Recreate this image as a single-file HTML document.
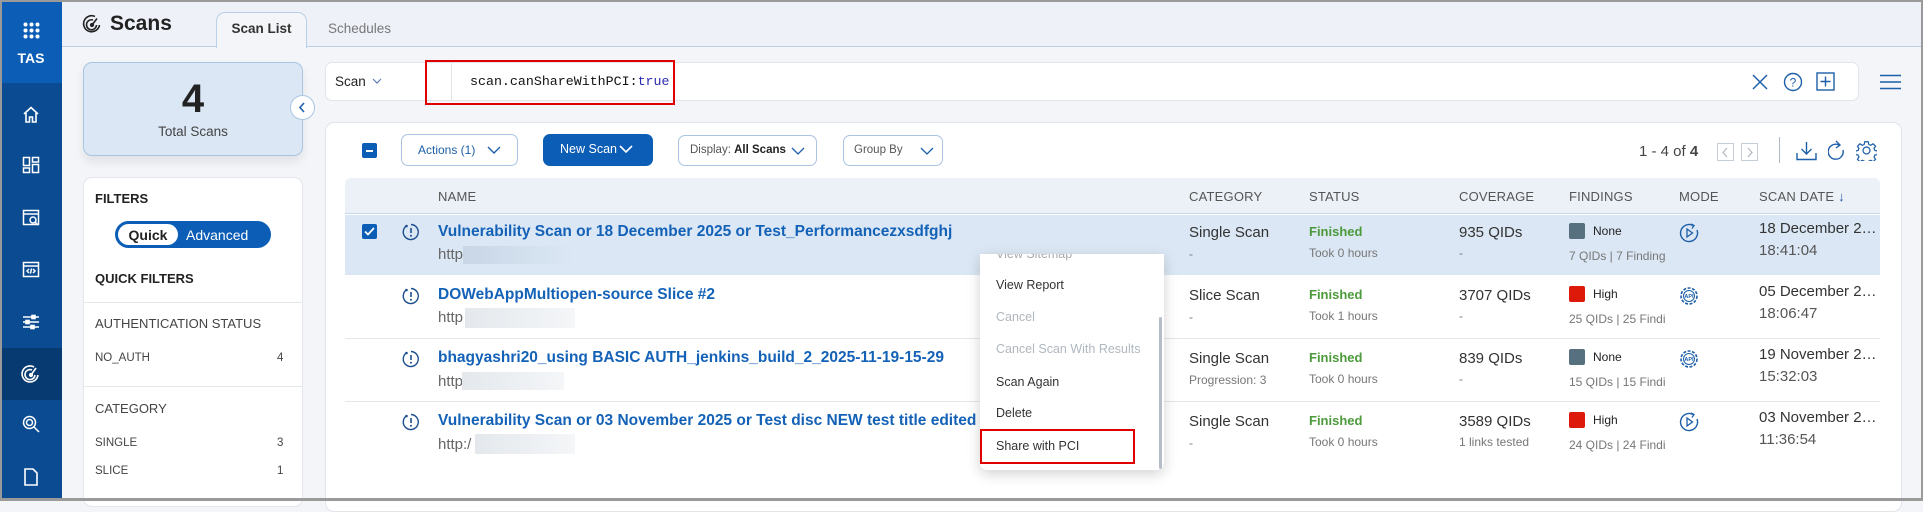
<!DOCTYPE html>
<html><head><meta charset="utf-8"><style>
*{box-sizing:border-box;margin:0;padding:0}
body{width:1923px;height:501px;overflow:hidden;font-family:"Liberation Sans",sans-serif;background:#f3f5f8;position:relative;color:#222}
.a{position:absolute}
.side{left:0;top:0;width:62px;height:501px;background:#0a4b91}
.t{position:absolute;white-space:nowrap}
.ico{position:absolute;left:21px;width:20px;height:20px}
.hdr{font-size:13px;color:#555;letter-spacing:.2px}
.ttl{font-size:15.5px;font-weight:bold;color:#1462b7}
.sub{font-size:12px;color:#777}
.big{font-size:15px;color:#333}
.grn{font-size:13px;font-weight:bold;color:#4c9a3c}
.btn{position:absolute;border:1px solid #a9c3e0;border-radius:7px;background:#fff;font-size:12px;color:#1d5fa8}
.sep{position:absolute;height:1px;background:#e3e7ec}
</style></head><body>
<div class="a" style="left:0;top:0;width:1923px;height:2px;background:#9a9a9a;z-index:9"></div>
<div class="a" style="left:0;top:498px;width:1923px;height:3px;background:#9a9a9a;z-index:9"></div>
<div class="a" style="left:0;top:0;width:2px;height:501px;background:#9a9a9a;z-index:9"></div>
<div class="a" style="left:1921px;top:0;width:2px;height:501px;background:#9a9a9a;z-index:9"></div>

<div class="a side"></div>
<div class="a" style="left:0;top:0;width:62px;height:83px;background:#0b5db6"></div>
<svg class="a" style="left:23px;top:22px" width="17" height="17"><g fill="#fff"><circle cx="2.5" cy="2.5" r="2"/><circle cx="8.5" cy="2.5" r="2"/><circle cx="14.5" cy="2.5" r="2"/><circle cx="2.5" cy="8.5" r="2"/><circle cx="8.5" cy="8.5" r="2"/><circle cx="14.5" cy="8.5" r="2"/><circle cx="2.5" cy="14.5" r="2"/><circle cx="8.5" cy="14.5" r="2"/><circle cx="14.5" cy="14.5" r="2"/></g></svg>
<div class="t" style="left:0;width:62px;text-align:center;top:50px;color:#fff;font-weight:bold;font-size:14px">TAS</div>
<svg class="ico" style="top:105px" viewBox="0 0 20 20" fill="none" stroke="#fff" stroke-width="1.6"><path d="M3 9 L10 2.5 L17 9 M5 8 V17 H8.5 V12 H11.5 V17 H15 V8"/></svg>
<svg class="ico" style="top:155px" viewBox="0 0 20 20" fill="none" stroke="#fff" stroke-width="1.5"><rect x="2.5" y="2.5" width="6" height="8"/><rect x="2.5" y="13" width="6" height="4.5"/><rect x="11.5" y="2.5" width="6" height="4.5"/><rect x="11.5" y="9.5" width="6" height="8"/></svg>
<svg class="ico" style="top:208px" viewBox="0 0 20 20" fill="none" stroke="#fff" stroke-width="1.5"><rect x="2.5" y="2.5" width="15" height="14"/><path d="M2.5 6 H17.5"/><circle cx="12" cy="12" r="3"/><path d="M14 14 L17 17"/></svg>
<svg class="ico" style="top:260px" viewBox="0 0 20 20" fill="none" stroke="#fff" stroke-width="1.5"><rect x="2.5" y="2.5" width="15" height="14"/><path d="M2.5 6 H17.5 M8 9 L6 11 L8 13 M12 9 L14 11 L12 13 M10.5 8.5 L9.5 13.5"/></svg>
<svg class="ico" style="top:312px" viewBox="0 0 20 20" fill="none" stroke="#fff" stroke-width="1.6"><path d="M2 5 H18 M2 10 H18 M2 15 H18"/><rect x="11" y="3.5" width="3" height="3" fill="#fff"/><rect x="5" y="8.5" width="3" height="3" fill="#fff"/><rect x="10" y="13.5" width="3" height="3" fill="#fff"/></svg>
<div class="a" style="left:0;top:348px;width:62px;height:52px;background:#083a72"></div>
<svg class="ico" style="top:364px" viewBox="0 0 20 20" fill="none" stroke="#fff" stroke-width="1.6"><path d="M13 3 A8 8 0 1 0 17 11"/><path d="M11 6 A5 5 0 1 0 14 11"/><circle cx="10" cy="11" r="1.3" fill="#fff"/><path d="M10 11 L15 4"/></svg>
<svg class="ico" style="top:414px" viewBox="0 0 20 20" fill="none" stroke="#fff" stroke-width="1.5"><circle cx="8.5" cy="8.5" r="6"/><circle cx="8.5" cy="8.5" r="3"/><path d="M13 13 L18 18"/></svg>
<svg class="ico" style="top:467px" viewBox="0 0 20 20" fill="none" stroke="#fff" stroke-width="1.6"><path d="M4 2 H12 L16 6 V18 H4 Z"/></svg>

<div class="a" style="left:62px;top:0;width:1861px;height:47px;background:#eef2f8;border-bottom:1px solid #b9d0e8"></div>
<svg class="a" style="left:82px;top:14px" width="20" height="20" viewBox="0 0 20 20" fill="none" stroke="#222" stroke-width="1.6"><path d="M13 2.5 A8 8 0 1 0 17.5 11"/><path d="M11 6 A5 5 0 1 0 14.5 11"/><circle cx="10" cy="11" r="1.3" fill="#222"/><path d="M10 11 L15 4.5"/></svg>
<div class="t" style="left:110px;top:12px;font-size:21px;font-weight:bold;color:#222">Scans</div>
<div class="a" style="left:216px;top:12px;width:91px;height:36px;background:#f3f5f8;border:1px solid #b9d0e8;border-bottom:none;border-radius:9px 9px 0 0"></div>
<div class="t" style="left:216px;width:91px;text-align:center;top:21px;font-size:13.5px;font-weight:bold;color:#333">Scan List</div>
<div class="t" style="left:328px;top:21px;font-size:13.5px;color:#777">Schedules</div>

<div class="a" style="left:83px;top:62px;width:220px;height:94px;background:#dbe7f4;border:1px solid #aac5e3;border-radius:9px;box-shadow:0 6px 10px rgba(0,0,0,.08)"></div>
<div class="t" style="left:83px;width:220px;text-align:center;top:77px;font-size:40px;font-weight:bold;color:#222">4</div>
<div class="t" style="left:83px;width:220px;text-align:center;top:124px;font-size:13.5px;color:#444">Total Scans</div>
<div class="a" style="left:290px;top:95px;width:25px;height:25px;border-radius:50%;background:#fff;border:1px solid #aac5e3"></div>
<svg class="a" style="left:297px;top:102px" width="11" height="11"><path d="M7 1 L3 5.5 L7 10" fill="none" stroke="#1d5fa8" stroke-width="1.6"/></svg>

<div class="a" style="left:83px;top:177px;width:220px;height:330px;background:#fff;border:1px solid #e3e7ec;border-radius:9px"></div>
<div class="t" style="left:95px;top:191px;font-size:13px;font-weight:bold;color:#222">FILTERS</div>
<div class="a" style="left:115px;top:221px;width:156px;height:27px;border-radius:14px;background:#0b5db6"></div>
<div class="a" style="left:118px;top:224px;width:60px;height:21px;border-radius:11px;background:#fff"></div>
<div class="t" style="left:118px;width:60px;text-align:center;top:227px;font-size:14px;font-weight:bold;color:#222">Quick</div>
<div class="t" style="left:186px;top:227px;font-size:14px;color:#fff">Advanced</div>
<div class="t" style="left:95px;top:271px;font-size:13px;font-weight:bold;color:#222">QUICK FILTERS</div>
<div class="sep" style="left:84px;top:302px;width:218px"></div>
<div class="t" style="left:95px;top:316px;font-size:13px;color:#444">AUTHENTICATION STATUS</div>
<div class="t" style="left:95px;top:352px;font-size:11.5px;color:#444">NO_AUTH</div>
<div class="t" style="left:277px;top:352px;font-size:11.5px;color:#444">4</div>
<div class="sep" style="left:84px;top:386px;width:218px"></div>
<div class="t" style="left:95px;top:401px;font-size:13px;color:#444">CATEGORY</div>
<div class="t" style="left:95px;top:437px;font-size:11.5px;color:#444">SINGLE</div>
<div class="t" style="left:277px;top:437px;font-size:11.5px;color:#444">3</div>
<div class="t" style="left:95px;top:465px;font-size:11.5px;color:#444">SLICE</div>
<div class="t" style="left:277px;top:465px;font-size:11.5px;color:#444">1</div>

<div class="a" style="left:325px;top:62px;width:1534px;height:39px;background:#fff;border:1px solid #e1e5ea;border-radius:7px"></div>
<div class="t" style="left:335px;top:74px;font-size:13.5px;color:#222">Scan</div>
<svg class="a" style="left:372px;top:78px" width="10" height="7"><path d="M1 1 L5 5 L9 1" fill="none" stroke="#5a7fb0" stroke-width="1.2"/></svg>
<div class="a" style="left:451px;top:63px;width:1px;height:37px;background:#e1e5ea"></div>
<div class="t" style="left:470px;top:74px;font-family:'Liberation Mono',monospace;font-size:13.3px;color:#111">scan.canShareWithPCI:<span style="color:#2b2bb0">true</span></div>
<div class="a" style="left:425px;top:60px;width:250px;height:45px;border:2px solid #e00000"></div>
<svg class="a" style="left:1752px;top:74px" width="16" height="16"><path d="M1 1 L15 15 M15 1 L1 15" stroke="#1d5fa8" stroke-width="1.5"/></svg>
<svg class="a" style="left:1783px;top:72px" width="20" height="20"><circle cx="10" cy="10" r="8.5" fill="none" stroke="#1d5fa8" stroke-width="1.4"/><text x="10" y="14.5" text-anchor="middle" font-size="12" fill="#1d5fa8" font-family="Liberation Sans">?</text></svg>
<svg class="a" style="left:1816px;top:72px" width="19" height="19"><rect x="1" y="1" width="17" height="17" fill="none" stroke="#1d5fa8" stroke-width="1.4"/><path d="M9.5 4.5 V14.5 M4.5 9.5 H14.5" stroke="#1d5fa8" stroke-width="1.4"/></svg>
<svg class="a" style="left:1880px;top:74px" width="21" height="16"><path d="M0 1.5 H21 M0 8 H21 M0 14.5 H21" stroke="#1d5fa8" stroke-width="1.4"/></svg>

<div class="a" style="left:325px;top:122px;width:1577px;height:390px;background:#fff;border:1px solid #e1e5ea;border-radius:9px"></div>
<div class="a" style="left:362px;top:143px;width:15px;height:15px;background:#0b5db6;border-radius:2px"></div>
<div class="a" style="left:366px;top:150px;width:7px;height:2px;background:#fff"></div>
<div class="btn" style="left:401px;top:134px;width:117px;height:32px"><span class="t" style="left:16px;top:8px">Actions (1)</span><svg class="a" style="left:85px;top:11px" width="14" height="9"><path d="M1 1 L7 7 L13 1" fill="none" stroke="#1d5fa8" stroke-width="1.4"/></svg></div>
<div class="a" style="left:543px;top:134px;width:110px;height:32px;background:#0b5db6;border-radius:7px"><span class="t" style="left:17px;top:8px;font-size:12.5px;color:#fff">New Scan</span><svg class="a" style="left:76px;top:11px" width="14" height="9"><path d="M1 1 L7 7 L13 1" fill="none" stroke="#fff" stroke-width="1.6"/></svg></div>
<div class="btn" style="left:678px;top:135px;width:139px;height:31px;color:#555"><span class="t" style="left:11px;top:8px;font-size:11.5px">Display: <b style="color:#222">All Scans</b></span><svg class="a" style="left:112px;top:11px" width="14" height="9"><path d="M1 1 L7 7 L13 1" fill="none" stroke="#1d5fa8" stroke-width="1.3"/></svg></div>
<div class="btn" style="left:843px;top:135px;width:100px;height:31px;color:#555"><span class="t" style="left:10px;top:8px;font-size:11.5px">Group By</span><svg class="a" style="left:76px;top:11px" width="14" height="9"><path d="M1 1 L7 7 L13 1" fill="none" stroke="#1d5fa8" stroke-width="1.3"/></svg></div>
<div class="t" style="left:1639px;top:143px;font-size:15px;color:#444">1 - 4 of <b>4</b></div>
<div class="a" style="left:1717px;top:143px;width:17px;height:18px;border:1px solid #c5cdd6"></div>
<svg class="a" style="left:1721px;top:147px" width="9" height="11"><path d="M6 1 L2 5.5 L6 10" fill="none" stroke="#b0b8c2" stroke-width="1.2"/></svg>
<div class="a" style="left:1741px;top:143px;width:17px;height:18px;border:1px solid #c5cdd6"></div>
<svg class="a" style="left:1745px;top:147px" width="9" height="11"><path d="M3 1 L7 5.5 L3 10" fill="none" stroke="#b0b8c2" stroke-width="1.2"/></svg>
<div class="a" style="left:1779px;top:137px;width:1px;height:26px;background:#b0b8c2"></div>
<svg class="a" style="left:1796px;top:141px" width="21" height="20"><path d="M10.5 1 V13 M5.5 8 L10.5 13 L15.5 8 M1 12 V18.5 H20 V12" fill="none" stroke="#1d5fa8" stroke-width="1.4"/></svg>
<svg class="a" style="left:1828px;top:140px" width="18" height="22"><path d="M11 5 A7.5 7.5 0 1 0 15 10" fill="none" stroke="#1d5fa8" stroke-width="1.4"/><path d="M8 1 L12 5 L8 8" fill="none" stroke="#1d5fa8" stroke-width="1.4"/></svg>
<svg class="a" style="left:1856px;top:140px" width="21" height="21" viewBox="0 0 24 24"><path d="M12 8a4 4 0 1 0 0 8a4 4 0 1 0 0-8z M10 2h4l.6 3 2.3 1 2.6-1.7 2.8 2.8-1.7 2.6 1 2.3 3 .6v4l-3 .6-1 2.3 1.7 2.6-2.8 2.8-2.6-1.7-2.3 1-.6 3h-4l-.6-3-2.3-1-2.6 1.7-2.8-2.8 1.7-2.6-1-2.3-3-.6v-4l3-.6 1-2.3-1.7-2.6 2.8-2.8 2.6 1.7 2.300-1z" fill="none" stroke="#1d5fa8" stroke-width="1.4"/></svg>

<div class="a" style="left:345px;top:178px;width:1535px;height:36px;background:#ecf1f8;border-bottom:1px solid #c5d7ec;border-radius:6px 6px 0 0"></div>
<div class="t hdr" style="left:438px;top:189px">NAME</div>
<div class="t hdr" style="left:1189px;top:189px">CATEGORY</div>
<div class="t hdr" style="left:1309px;top:189px">STATUS</div>
<div class="t hdr" style="left:1459px;top:189px">COVERAGE</div>
<div class="t hdr" style="left:1569px;top:189px">FINDINGS</div>
<div class="t hdr" style="left:1679px;top:189px">MODE</div>
<div class="t hdr" style="left:1759px;top:189px">SCAN DATE <span style="color:#1d5fa8">↓</span></div>

<div class="a" style="left:345px;top:215px;width:1535px;height:60px;background:#dbe7f4"></div>
<div class="sep" style="left:345px;top:338px;width:1535px"></div>
<div class="sep" style="left:345px;top:401px;width:1535px"></div>

<div class="a" style="left:362px;top:224px;width:15px;height:15px;background:#0b5db6;border-radius:2px"></div>
<svg class="a" style="left:364px;top:227px" width="11" height="9"><path d="M1 4.5 L4 7.5 L10 1" fill="none" stroke="#fff" stroke-width="1.8"/></svg>

<svg class="a" style="left:402px;top:223px" width="18" height="18" viewBox="0 0 18 18"><path d="M5 2.5 A7.5 7.5 0 1 0 9 1.5" fill="none" stroke="#1d4f8f" stroke-width="1.4"/><circle cx="4.5" cy="3" r="1.3" fill="#1d4f8f"/><path d="M9 5 V10" stroke="#1d4f8f" stroke-width="1.6"/><circle cx="9" cy="12.7" r="1" fill="#1d4f8f"/></svg>
<svg class="a" style="left:402px;top:287px" width="18" height="18" viewBox="0 0 18 18"><path d="M5 2.5 A7.5 7.5 0 1 0 9 1.5" fill="none" stroke="#1d4f8f" stroke-width="1.4"/><circle cx="4.5" cy="3" r="1.3" fill="#1d4f8f"/><path d="M9 5 V10" stroke="#1d4f8f" stroke-width="1.6"/><circle cx="9" cy="12.7" r="1" fill="#1d4f8f"/></svg>
<svg class="a" style="left:402px;top:350px" width="18" height="18" viewBox="0 0 18 18"><path d="M5 2.5 A7.5 7.5 0 1 0 9 1.5" fill="none" stroke="#1d4f8f" stroke-width="1.4"/><circle cx="4.5" cy="3" r="1.3" fill="#1d4f8f"/><path d="M9 5 V10" stroke="#1d4f8f" stroke-width="1.6"/><circle cx="9" cy="12.7" r="1" fill="#1d4f8f"/></svg>
<svg class="a" style="left:402px;top:413px" width="18" height="18" viewBox="0 0 18 18"><path d="M5 2.5 A7.5 7.5 0 1 0 9 1.5" fill="none" stroke="#1d4f8f" stroke-width="1.4"/><circle cx="4.5" cy="3" r="1.3" fill="#1d4f8f"/><path d="M9 5 V10" stroke="#1d4f8f" stroke-width="1.6"/><circle cx="9" cy="12.7" r="1" fill="#1d4f8f"/></svg>

<div class="t ttl" style="left:438px;top:223px">Vulnerability Scan or 18 December 2025 or Test_Performancezxsdfghj</div>
<div class="t big" style="left:438px;top:246px;color:#666">http</div>
<div class="a" style="left:463px;top:246px;width:110px;height:18px;background:linear-gradient(90deg,#c8d6e6,#dbe7f4)"></div>
<div class="t ttl" style="left:438px;top:286px">DOWebAppMultiopen-source Slice #2</div>
<div class="t big" style="left:438px;top:309px;color:#666">http</div>
<div class="a" style="left:465px;top:308px;width:110px;height:20px;background:linear-gradient(90deg,#e4e8ec,#f4f6f8)"></div>
<div class="t ttl" style="left:438px;top:349px">bhagyashri20_using BASIC AUTH_jenkins_build_2_2025-11-19-15-29</div>
<div class="t big" style="left:438px;top:373px;color:#666">http</div>
<div class="a" style="left:462px;top:372px;width:102px;height:18px;background:linear-gradient(90deg,#e4e8ec,#f4f6f8)"></div>
<div class="t ttl" style="left:438px;top:412px">Vulnerability Scan or 03 November 2025 or Test disc NEW test title edited f</div>
<div class="t big" style="left:438px;top:436px;color:#666">http:/</div>
<div class="a" style="left:475px;top:434px;width:100px;height:20px;background:linear-gradient(90deg,#e4e8ec,#f4f6f8)"></div>

<div class="t big" style="left:1189px;top:224px">Single Scan</div><div class="t sub" style="left:1189px;top:247px">-</div>
<div class="t big" style="left:1189px;top:287px">Slice Scan</div><div class="t sub" style="left:1189px;top:310px">-</div>
<div class="t big" style="left:1189px;top:350px">Single Scan</div><div class="t sub" style="left:1189px;top:373px">Progression: 3</div>
<div class="t big" style="left:1189px;top:413px">Single Scan</div><div class="t sub" style="left:1189px;top:436px">-</div>

<div class="t grn" style="left:1309px;top:224px">Finished</div><div class="t sub" style="left:1309px;top:246px">Took 0 hours</div>
<div class="t grn" style="left:1309px;top:287px">Finished</div><div class="t sub" style="left:1309px;top:309px">Took 1 hours</div>
<div class="t grn" style="left:1309px;top:350px">Finished</div><div class="t sub" style="left:1309px;top:372px">Took 0 hours</div>
<div class="t grn" style="left:1309px;top:413px">Finished</div><div class="t sub" style="left:1309px;top:435px">Took 0 hours</div>

<div class="t big" style="left:1459px;top:224px">935 QIDs</div><div class="t sub" style="left:1459px;top:246px">-</div>
<div class="t big" style="left:1459px;top:287px">3707 QIDs</div><div class="t sub" style="left:1459px;top:309px">-</div>
<div class="t big" style="left:1459px;top:350px">839 QIDs</div><div class="t sub" style="left:1459px;top:372px">-</div>
<div class="t big" style="left:1459px;top:413px">3589 QIDs</div><div class="t sub" style="left:1459px;top:435px">1 links tested</div>

<div class="a" style="left:1569px;top:223px;width:16px;height:16px;background:#56707f;border-radius:2px"></div><div class="t" style="left:1593px;top:224px;font-size:12px">None</div><div class="t sub" style="left:1569px;top:249px">7 QIDs | 7 Finding</div>
<div class="a" style="left:1569px;top:286px;width:16px;height:16px;background:#dd1a0a;border-radius:2px"></div><div class="t" style="left:1593px;top:287px;font-size:12px">High</div><div class="t sub" style="left:1569px;top:312px">25 QIDs | 25 Findi</div>
<div class="a" style="left:1569px;top:349px;width:16px;height:16px;background:#56707f;border-radius:2px"></div><div class="t" style="left:1593px;top:350px;font-size:12px">None</div><div class="t sub" style="left:1569px;top:375px">15 QIDs | 15 Findi</div>
<div class="a" style="left:1569px;top:412px;width:16px;height:16px;background:#dd1a0a;border-radius:2px"></div><div class="t" style="left:1593px;top:413px;font-size:12px">High</div><div class="t sub" style="left:1569px;top:438px">24 QIDs | 24 Findi</div>

<svg class="a" style="left:1679px;top:223px" width="20" height="20"><path d="M14 2.5 A8.5 8.5 0 1 0 18 7" fill="none" stroke="#1d5fa8" stroke-width="1.4"/><path d="M12 1 L15 2.5 L13 5.5" fill="none" stroke="#1d5fa8" stroke-width="1.3"/><path d="M8 6 L13.5 10 L8 14 Z" fill="none" stroke="#1d5fa8" stroke-width="1.3"/></svg>
<svg class="a" style="left:1679px;top:286px" width="20" height="20"><circle cx="10" cy="10" r="8" fill="none" stroke="#1d5fa8" stroke-width="1.6" stroke-dasharray="3 1.5"/><circle cx="10" cy="10" r="5.5" fill="none" stroke="#1d5fa8" stroke-width="1"/><text x="10" y="12" text-anchor="middle" font-size="5.5" fill="#1d5fa8" font-family="Liberation Sans" font-weight="bold">API</text></svg>
<svg class="a" style="left:1679px;top:349px" width="20" height="20"><circle cx="10" cy="10" r="8" fill="none" stroke="#1d5fa8" stroke-width="1.6" stroke-dasharray="3 1.5"/><circle cx="10" cy="10" r="5.5" fill="none" stroke="#1d5fa8" stroke-width="1"/><text x="10" y="12" text-anchor="middle" font-size="5.5" fill="#1d5fa8" font-family="Liberation Sans" font-weight="bold">API</text></svg>
<svg class="a" style="left:1679px;top:412px" width="20" height="20"><path d="M14 2.5 A8.5 8.5 0 1 0 18 7" fill="none" stroke="#1d5fa8" stroke-width="1.4"/><path d="M12 1 L15 2.5 L13 5.5" fill="none" stroke="#1d5fa8" stroke-width="1.3"/><path d="M8 6 L13.5 10 L8 14 Z" fill="none" stroke="#1d5fa8" stroke-width="1.3"/></svg>

<div class="t big" style="left:1759px;top:220px">18 December 2…</div><div class="t big" style="left:1759px;top:242px;color:#555">18:41:04</div>
<div class="t big" style="left:1759px;top:283px">05 December 2…</div><div class="t big" style="left:1759px;top:305px;color:#555">18:06:47</div>
<div class="t big" style="left:1759px;top:346px">19 November 2…</div><div class="t big" style="left:1759px;top:368px;color:#555">15:32:03</div>
<div class="t big" style="left:1759px;top:409px">03 November 2…</div><div class="t big" style="left:1759px;top:431px;color:#555">11:36:54</div>

<div class="a" style="left:980px;top:254px;width:184px;height:216px;background:#fff;border-radius:0 0 7px 7px;box-shadow:0 4px 14px rgba(0,0,0,.18);overflow:hidden">
<div class="t" style="left:16px;top:-7px;font-size:12.5px;color:#aaa">View Sitemap</div>
<div class="t" style="left:16px;top:24px;font-size:12.5px;color:#333">View Report</div>
<div class="t" style="left:16px;top:56px;font-size:12.5px;color:#b0b8c0">Cancel</div>
<div class="t" style="left:16px;top:88px;font-size:12.5px;color:#b0b8c0">Cancel Scan With Results</div>
<div class="t" style="left:16px;top:121px;font-size:12.5px;color:#333">Scan Again</div>
<div class="t" style="left:16px;top:152px;font-size:12.5px;color:#333">Delete</div>
<div class="t" style="left:16px;top:185px;font-size:12.5px;color:#333">Share with PCI</div>
<div class="a" style="left:179px;top:63px;width:3px;height:152px;background:#b5bec8;border-radius:2px"></div>
</div>
<div class="a" style="left:980px;top:429px;width:155px;height:35px;border:2px solid #e00000"></div>
</body></html>
